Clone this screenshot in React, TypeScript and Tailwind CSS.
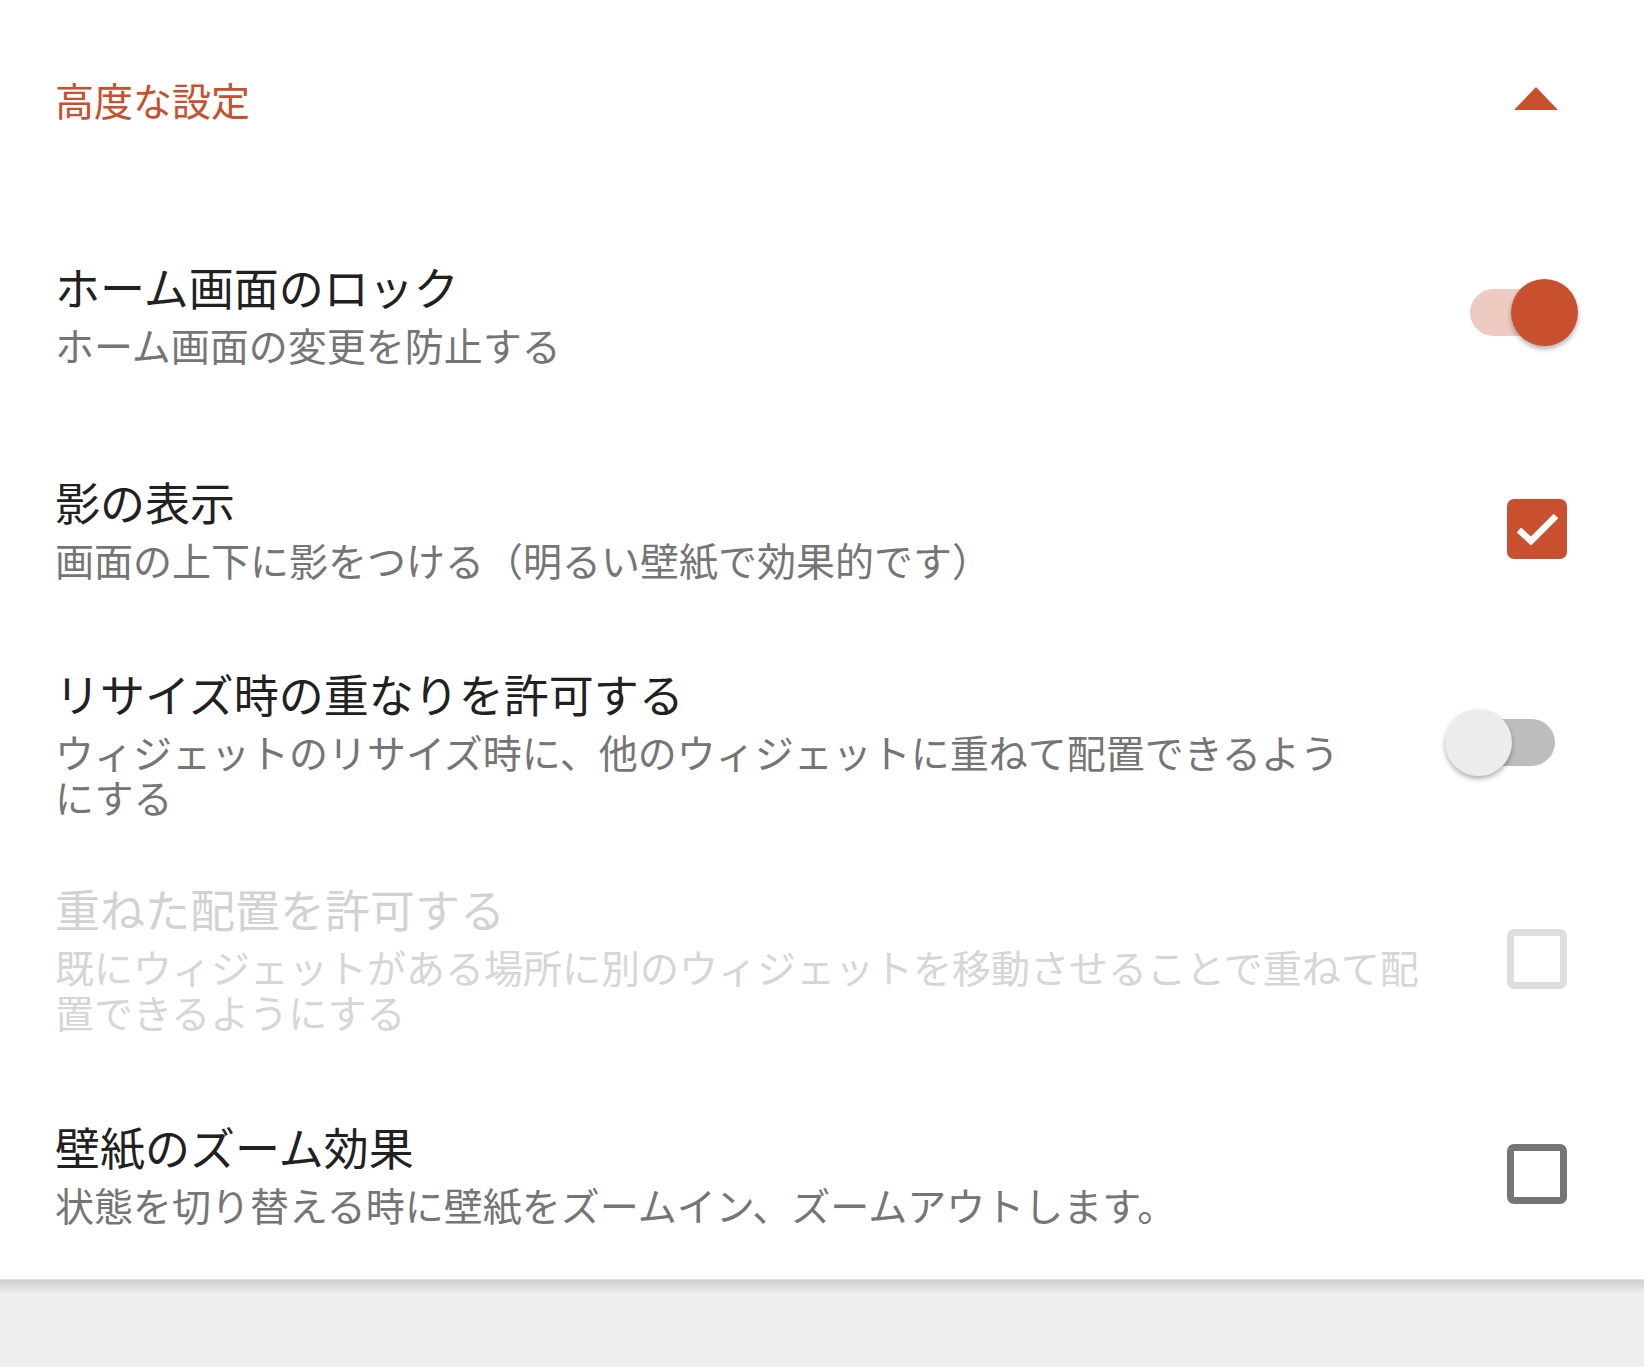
import React, { useState } from 'react';

type Widget = 'switch' | 'checkbox';

interface Pref {
  title: string;
  summary: string;
  widget: Widget;
  checked: boolean;
  disabled?: boolean;
}

const prefs: Pref[] = [
  { title: 'ホーム画面のロック', summary: 'ホーム画面の変更を防止する', widget: 'switch', checked: true },
  { title: '影の表示', summary: '画面の上下に影をつける（明るい壁紙で効果的です）', widget: 'checkbox', checked: true },
  {
    title: 'リサイズ時の重なりを許可する',
    summary: 'ウィジェットのリサイズ時に、他のウィジェットに重ねて配置できるようにする',
    widget: 'switch',
    checked: false,
  },
  {
    title: '重ねた配置を許可する',
    summary: '既にウィジェットがある場所に別のウィジェットを移動させることで重ねて配置できるようにする',
    widget: 'checkbox',
    checked: false,
    disabled: true,
  },
  { title: '壁紙のズーム効果', summary: '状態を切り替える時に壁紙をズームイン、ズームアウトします。', widget: 'checkbox', checked: false },
];

const Toggle: React.FC<{ on: boolean }> = ({ on }) => (
  <div className="relative w-[133px] h-[67px] mt-[2px]">
    <div
      className={`absolute left-[25px] top-[10px] w-[85px] h-[47px] rounded-full ${on ? 'bg-[#eecbc1]' : 'bg-[#bdbdbd]'}`}
    />
    <div
      className={`absolute top-0 w-[67px] h-[67px] rounded-full shadow-[0_3px_5px_rgba(0,0,0,0.3)] ${
        on ? 'right-0 bg-[#c8502f]' : 'left-0 bg-[#ececec]'
      }`}
    />
  </div>
);

const Check: React.FC<{ on: boolean; disabled?: boolean }> = ({ on, disabled }) =>
  on ? (
    <div className="w-[60px] h-[60px] rounded-[7px] bg-[#c8502f]">
      <svg width="60" height="60" viewBox="0 0 60 60">
        <path d="M12 31l12 11L49 17" fill="none" stroke="#fff" strokeWidth="6.5" strokeLinecap="butt" strokeLinejoin="miter" />
      </svg>
    </div>
  ) : (
    <div
      className={`w-[60px] h-[60px] rounded-[7px] border-[7px] ${disabled ? 'border-[#dedede]' : 'border-[#757575]'}`}
    />
  );

const App: React.FC = () => {
  const [items] = useState(prefs);

  return (
    <div className="min-h-screen bg-[#efefef] font-['Noto_Sans_CJK_JP',sans-serif]">
      <div className="bg-white">
        <div className="h-[204px] flex items-center pl-[55px] pr-[86px]">
          <span className="flex-1 text-[39px] leading-[52px] text-[#c8502f] -mt-[6px]">高度な設定</span>
          <svg width="44" height="23" viewBox="0 0 44 23" className="mb-[8px]">
            <polygon points="0,23 44,23 22,0" fill="#c8502f" />
          </svg>
        </div>

        {items.map((p) => (
          <div key={p.title} className="h-[215px] flex items-center pl-[55px] pr-[66px]">
            <div className="flex-1 min-w-0 -mt-[2px]">
              <div className={`text-[45px] leading-[64px] ${p.disabled ? 'text-[#d2d2d2]' : 'text-[#212121]'}`}>
                {p.title}
              </div>
              <div className={`mt-[3px] text-[39px] leading-[45px] ${p.disabled ? 'text-[#d6d6d6]' : 'text-[#757575]'}`}>
                {p.summary}
              </div>
            </div>
            {p.widget === 'switch' ? (
              <div className="w-[218px] flex justify-end">
                <Toggle on={p.checked} />
              </div>
            ) : (
              <div className="w-[138px] flex justify-end pr-[11px] mt-[4px]">
                <Check on={p.checked} disabled={p.disabled} />
              </div>
            )}
          </div>
        ))}
      </div>
      <div className="h-[1px] bg-[#e0e0e0]" />
      <div className="h-[14px] bg-gradient-to-b from-[#d0d0d0] to-[#efefef]" />
    </div>
  );
};

export default App;
